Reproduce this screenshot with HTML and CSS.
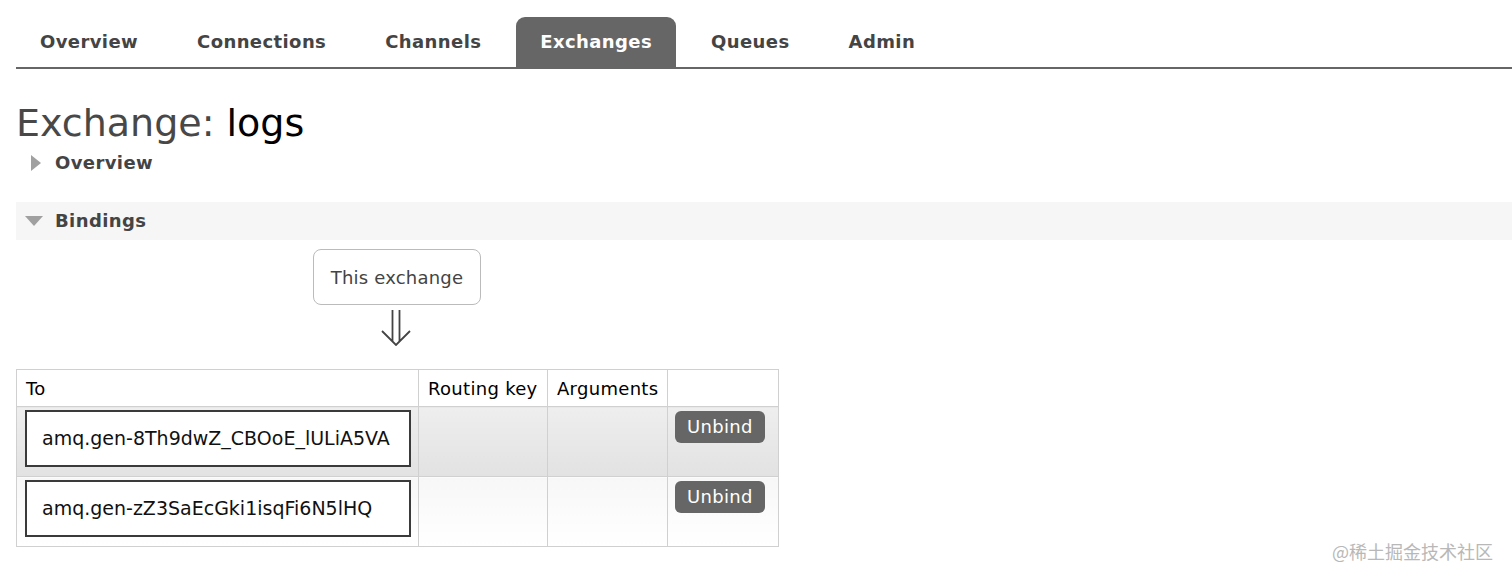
FILE: index.html
```html
<!DOCTYPE html>
<html lang="en">
<head>
<meta charset="utf-8">
<title>Exchange: logs</title>
<link rel="stylesheet" href="styles.css">
</head>
<body>
<div class="page">
  <nav class="tabs">
    <a class="tab">Overview</a>
    <a class="tab">Connections</a>
    <a class="tab">Channels</a>
    <a class="tab active">Exchanges</a>
    <a class="tab">Queues</a>
    <a class="tab">Admin</a>
  </nav>

  <h1 class="title">Exchange: <b class="name">logs</b></h1>

  <div class="section-head">
    <span class="tri-right"></span>
    <span class="section-label">Overview</span>
  </div>

  <div class="section-head band">
    <span class="tri-down"></span>
    <span class="section-label">Bindings</span>
  </div>

  <div class="this-box">This exchange</div>
  <svg class="arrow" width="32" height="36" viewBox="0 0 32 36">
    <path d="M12.5 0 V31 M19.5 0 V31 M2 21 L16 35 L30 21" fill="none" stroke="#444" stroke-width="1.8"/>
  </svg>

  <table class="bindings">
    <colgroup>
      <col class="c-to"><col class="c-key"><col class="c-args"><col class="c-act">
    </colgroup>
    <thead>
      <tr><th>To</th><th>Routing key</th><th>Arguments</th><th></th></tr>
    </thead>
    <tbody>
      <tr class="alt1">
        <td class="to"><span class="queue">amq.gen-8Th9dwZ_CBOoE_lULiA5VA</span></td>
        <td></td><td></td>
        <td class="act"><button class="btn">Unbind</button></td>
      </tr>
      <tr class="alt2">
        <td class="to"><span class="queue">amq.gen-zZ3SaEcGki1isqFi6N5lHQ</span></td>
        <td></td><td></td>
        <td class="act"><button class="btn">Unbind</button></td>
      </tr>
    </tbody>
  </table>
</div>
<div class="watermark">@稀土掘金技术社区</div>
</body>
</html>
```

FILE: styles.css
```css
html, body {
  margin: 0;
  padding: 0;
  background: #fff;
}
body {
  font-family: "DejaVu Sans", Verdana, sans-serif;
  color: #444;
  position: relative;
  min-height: 579px;
  overflow: hidden;
}
.page {
  padding-left: 16px;
}
.tabs {
  display: flex;
  margin-top: 17px;
  border-bottom: 2px solid #666;
  gap: 11px;
}
.tab {
  display: block;
  padding: 14px 24px 14px;
  font-size: 18px;
  line-height: 22px;
  font-weight: bold;
  letter-spacing: 0.4px;
  color: #444;
  border-radius: 9px 9px 0 0;
}
.tab.active {
  background: #666;
  color: #fff;
}
.title {
  margin: 33px 0 0;
  font-size: 38px;
  line-height: 42px;
  font-weight: normal;
  color: #484848;
}
.title .name {
  font-weight: normal;
  color: #000;
}
.section-head {
  display: flex;
  align-items: center;
  margin-top: 8px;
  height: 22px;
  padding-left: 15px;
}
.section-label {
  font-size: 18px;
  line-height: 22px;
  font-weight: bold;
  letter-spacing: 0.4px;
  color: #444;
}
.tri-right {
  width: 0;
  height: 0;
  border-left: 10px solid #a0a0a0;
  border-top: 8px solid transparent;
  border-bottom: 8px solid transparent;
  margin-right: 14px;
}
.band {
  margin-top: 28px;
  height: 38px;
  background: #f6f6f6;
  padding-left: 9px;
}
.tri-down {
  width: 0;
  height: 0;
  border-top: 10px solid #a0a0a0;
  border-left: 9px solid transparent;
  border-right: 9px solid transparent;
  margin-right: 12px;
}
.this-box {
  margin: 9px 0 0 297px;
  width: 168px;
  height: 56px;
  box-sizing: border-box;
  border: 1px solid #bbb;
  border-radius: 8px;
  display: flex;
  align-items: center;
  justify-content: center;
  font-size: 18px;
  letter-spacing: 0.2px;
  color: #444;
}
.arrow {
  display: block;
  margin: 5px 0 0 364px;
}
.bindings {
  margin-top: 23px;
  border-collapse: collapse;
  table-layout: fixed;
  width: 762px;
  border: 1px solid #d0d0d0;
  font-size: 18px;
  color: #000;
}
.c-to { width: 402px; }
.c-key { width: 129px; }
.c-args { width: 120px; }
.c-act { width: 111px; }
.bindings th {
  height: 36px;
  padding: 0 9px;
  text-align: left;
  font-weight: normal;
  letter-spacing: 0.3px;
  border: 1px solid #d0d0d0;
  background: #fff;
  white-space: nowrap;
}
.bindings td {
  border: 1px solid #d0d0d0;
  vertical-align: top;
  padding: 0;
}
.bindings tbody tr { height: 70px; }
.alt1 td { background: linear-gradient(#eeeeee, #e2e2e2); }
.alt2 td { background: linear-gradient(#f7f7f7, #ffffff); }
.bindings td.to {
  padding: 3px 7px 0 8px;
}
.queue {
  display: block;
  height: 57px;
  box-sizing: border-box;
  border: 2px solid #3a3a3a;
  background: #fff;
  padding-left: 15px;
  line-height: 53px;
  font-size: 19px;
  color: #111;
  white-space: nowrap;
}
.bindings td.act {
  padding: 4px 0 0 7px;
}
.btn {
  display: block;
  height: 32px;
  padding: 0 12px;
  border: none;
  border-radius: 6px;
  background: #666;
  color: #fff;
  font-family: "DejaVu Sans", Verdana, sans-serif;
  font-size: 18px;
  letter-spacing: 0.3px;
  line-height: 32px;
}
.watermark {
  position: absolute;
  right: 19px;
  top: 538px;
  font-family: "Noto Sans CJK SC", sans-serif;
  font-size: 18px;
  color: #b8b8b8;
}
```
